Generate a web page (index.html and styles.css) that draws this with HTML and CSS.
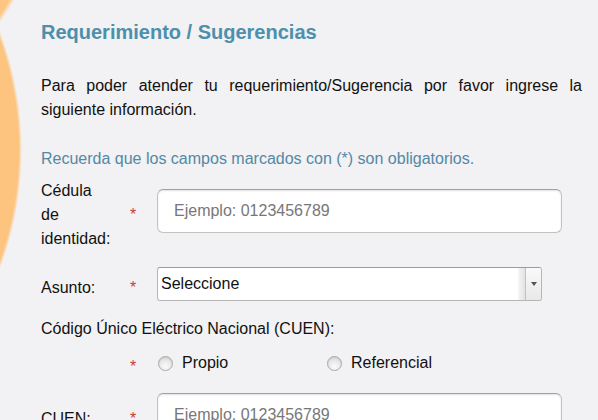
FILE: index.html
```html
<!DOCTYPE html>
<html lang="es">
<head>
<meta charset="utf-8">
<title>Requerimiento / Sugerencias</title>
<link rel="stylesheet" href="styles.css">
</head>
<body>
<main class="page">
  <h1 class="title">Requerimiento / Sugerencias</h1>
  <p class="intro">Para poder atender tu requerimiento/Sugerencia por favor ingrese la siguiente información.</p>
  <p class="note">Recuerda que los campos marcados con (*) son obligatorios.</p>
  <form class="form">
    <div class="row row-cedula">
      <label class="label" for="cedula">Cédula de identidad:</label>
      <span class="req">*</span>
      <input class="input" id="cedula" type="text" placeholder="Ejemplo: 0123456789">
    </div>
    <div class="row row-asunto">
      <label class="label">Asunto:</label>
      <span class="req">*</span>
      <div class="select">
        <span class="select-value">Seleccione</span>
        <span class="select-shade"></span>
        <span class="select-btn"><span class="caret"></span></span>
      </div>
    </div>
    <div class="heading">Código Único Eléctrico Nacional (CUEN):</div>
    <div class="row row-radio">
      <span class="label"></span>
      <span class="req">*</span>
      <div class="options">
        <span class="option"><span class="radio"></span>Propio</span>
        <span class="option"><span class="radio"></span>Referencial</span>
      </div>
    </div>
    <div class="row row-cuen">
      <label class="label" for="cuen">CUEN:</label>
      <span class="req">*</span>
      <input class="input" id="cuen" type="text" placeholder="Ejemplo: 0123456789">
    </div>
  </form>
</main>
</body>
</html>
```
FILE: styles.css
```css
html, body {
  margin: 0;
  padding: 0;
}
body {
  min-height: 100vh;
  background-color: #f2f1f3;
  background-image:
    radial-gradient(circle 246px at -200px -120px, #fdc680 98%, rgba(253, 198, 128, 0) 100%),
    radial-gradient(circle 335px at -313px 150px, #fdc47f 99%, rgba(253, 196, 127, 0) 100%);
  background-repeat: no-repeat;
  font-family: "Liberation Sans", Arial, sans-serif;
  font-size: 16px;
  color: #111;
}
.page {
  padding: 20px 16px 0 41px;
}
.title {
  margin: 0;
  font-size: 20px;
  line-height: 24px;
  font-weight: 700;
  color: #4b90ad;
}
.intro {
  margin: 30px 0 0;
  line-height: 24px;
  text-align: justify;
}
.note {
  margin: 25px 0 0;
  line-height: 24px;
  color: #5289a5;
}
.form {
  display: flex;
  flex-direction: column;
}
.row {
  display: grid;
  grid-template-columns: 70px 46px auto;
  align-items: center;
  justify-items: start;
}
.label {
  padding-top: 8px;
  line-height: 24px;
}
.req {
  padding: 8px 0 0 19px;
  line-height: 24px;
  color: #cc3b3b;
}
.input {
  width: 405px;
  height: 44px;
  box-sizing: border-box;
  margin: 0;
  padding: 0 16px;
  border: 1px solid #c2c2c2;
  border-top-color: #a0a0a0;
  border-radius: 6px;
  background: #fff;
  box-shadow: inset 0 1px 2px rgba(0, 0, 0, 0.12);
  font: 16px "Liberation Sans", Arial, sans-serif;
  color: #111;
  outline: none;
}
.input::placeholder {
  color: #777;
}
.row-asunto {
  margin-top: 16px;
}
.select {
  display: flex;
  width: 385px;
  height: 34px;
  box-sizing: border-box;
  border: 1px solid #b6b6b6;
  border-top-color: #9c9c9c;
  border-radius: 3px;
  background: #fff;
  overflow: hidden;
}
.select-value {
  flex: 1;
  padding-left: 3px;
  line-height: 32px;
  color: #111;
}
.select-shade {
  width: 7px;
  background: linear-gradient(to right, #f6f6f6, #e2e2e2);
  border-right: 1px solid #c2c2c2;
}
.select-btn {
  width: 15px;
  display: flex;
  align-items: center;
  justify-content: center;
  background: linear-gradient(#fafafa, #e8e8e8);
}
.caret {
  width: 0;
  height: 0;
  border-left: 3px solid transparent;
  border-right: 3px solid transparent;
  border-top: 4px solid #555;
}
.heading {
  margin-top: 16px;
  line-height: 24px;
}
.row-radio {
  margin-top: 6px;
}
.options {
  display: flex;
  align-items: center;
  margin-left: 1px;
}
.option {
  display: flex;
  align-items: center;
  gap: 9px;
  width: 169px;
  line-height: 24px;
}
.radio {
  width: 15px;
  height: 15px;
  box-sizing: border-box;
  border-radius: 50%;
  border: 1px solid #a9a9a9;
  background: radial-gradient(circle at 50% 75%, #fbfbfb 0%, #e6e6e6 55%, #d2d2d2 100%);
  box-shadow: inset 0 1px 1px rgba(0, 0, 0, 0.08);
}
.row-cuen {
  margin-top: 14px;
}
```
